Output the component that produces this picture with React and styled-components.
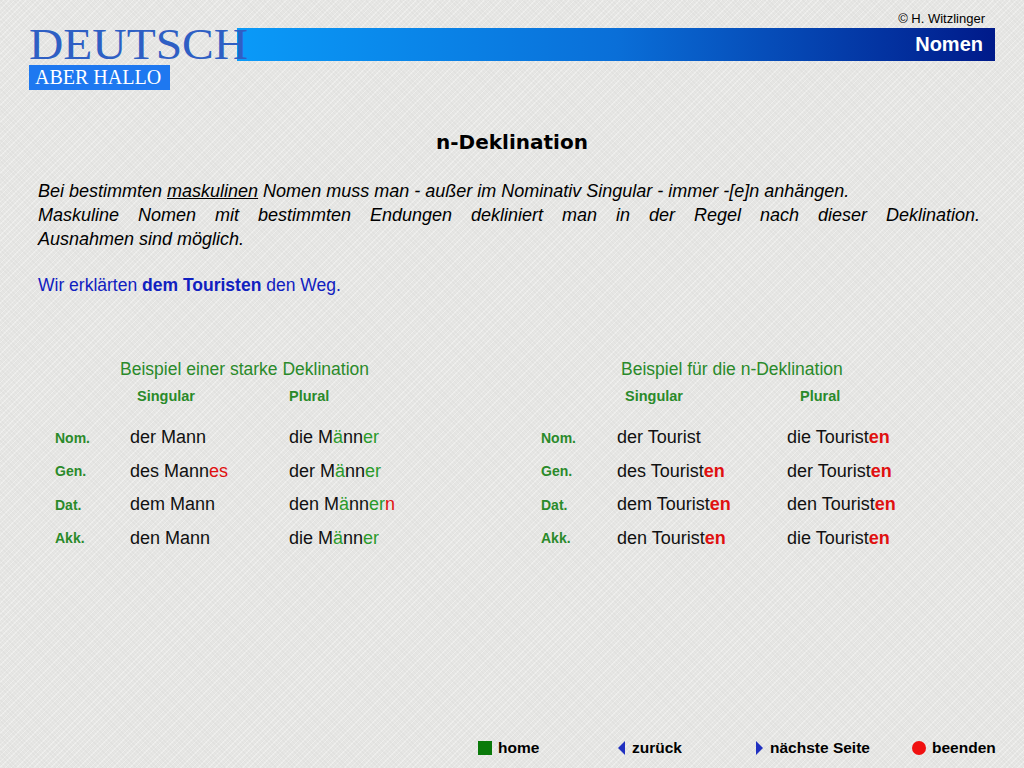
import React from "react";
import styled, { createGlobalStyle } from "styled-components";

const G = createGlobalStyle`
  html,body{margin:0;padding:0;}
  body{background:#e6e6e4;font-family:"Liberation Sans",Arial,sans-serif;}
`;
const Page = styled.div`width:1024px;height:768px;position:relative;overflow:hidden;
  background-image:repeating-linear-gradient(45deg,rgba(0,0,0,.025) 0 1px,transparent 1px 3px),repeating-linear-gradient(-45deg,rgba(255,255,255,.35) 0 1px,transparent 1px 4px);`;
const Header = styled.div`display:flex;padding:9px 29px 0 29px;gap:4px;`;
const Logo = styled.div`display:flex;flex-direction:column;width:204px;`;
const LogoTitle = styled.div`font-family:"Liberation Serif",serif;font-size:44px;line-height:38px;color:#2e5fc4;transform:scaleX(1.08);transform-origin:left;margin-top:17px;`;
const LogoSub = styled.div`background:#1e78f0;color:#fff;font-family:"Liberation Serif",serif;font-size:20px;width:141px;padding:0 0 0 6px;height:25px;box-sizing:border-box;line-height:25px;margin-top:1px;`;
const Right = styled.div`flex:1;display:flex;flex-direction:column;align-items:flex-end;`;
const Copy = styled.div`font-size:13px;color:#000;margin-right:10px;height:19px;line-height:19px;`;
const Bar = styled.div`align-self:stretch;height:33px;background:linear-gradient(90deg,#0a9af8,#0a6fd8 50%,#001a8a);color:#fff;font-weight:bold;font-size:20px;display:flex;align-items:center;justify-content:flex-end;padding-right:12px;`;
const Title = styled.h1`margin:40px 0 0;text-align:center;font-family:"DejaVu Sans",sans-serif;font-size:20px;font-weight:bold;`;
const Para = styled.p`margin:25px 44px 0 38px;font-style:italic;font-size:18px;line-height:24px;text-align:justify;`;
const Line = styled.span`display:block;text-align:${p=>p.j?"justify":"left"};text-align-last:${p=>p.j?"justify":"auto"};`;
const U = styled.span`text-decoration:underline;`;
const Example = styled.p`margin:24px 0 0 38px;font-size:17.5px;color:#1020c0;`;
const Tables = styled.div`display:grid;grid-template-columns:486px 1fr;margin-top:58px;`;
const Table = styled.div`display:grid;grid-template-columns:${p=>p.cols};grid-auto-rows:33.5px;align-items:center;padding-left:${p=>p.pl}px;`;
const Head = styled.div`grid-column:1/-1;color:#2a8a2a;font-size:17.5px;height:24px;padding-left:${p=>p.pl}px;`;
const Sub = styled.div`color:#2a8a2a;font-weight:bold;font-size:14.5px;padding-left:${p=>p.pl||0}px;align-self:start;`;
const Lab = styled.div`color:#2a8a2a;font-weight:bold;font-size:14px;`;
const Cell = styled.div`font-size:18px;color:#111;`;
const R = styled.span`color:${p=>p.c==="g"?"#2a9a2a":"#e01010"};font-weight:${p=>p.b?"bold":"normal"};`;
const Footer = styled.div`position:absolute;bottom:11px;left:478px;display:flex;font-weight:bold;font-size:15.5px;`;
const Nav = styled.div`display:flex;align-items:center;gap:6px;width:${p=>p.w}px;`;
const Sq = styled.span`width:14px;height:14px;background:#0a7a0a;display:inline-block;`;
const Dot = styled.span`width:14px;height:14px;border-radius:50%;background:#f01010;display:inline-block;`;
const Tri = ({l})=> <svg width="9" height="14" viewBox="0 0 9 14"><polygon points={l?"8,0 8,14 1,7":"1,0 1,14 8,7"} fill="#2030c0"/></svg>;

const left=[["Nom.","der Mann",<>die M<R c="g">ä</R>nn<R c="g">er</R></>],["Gen.",<>des Mann<R>es</R></>,<>der M<R c="g">ä</R>nn<R c="g">er</R></>],["Dat.","dem Mann",<>den M<R c="g">ä</R>nn<R c="g">er</R><R>n</R></>],["Akk.","den Mann",<>die M<R c="g">ä</R>nn<R c="g">er</R></>]];
const E=<R b>en</R>;
const right=[["Nom.","der Tourist",<>die Tourist{E}</>],["Gen.",<>des Tourist{E}</>,<>der Tourist{E}</>],["Dat.",<>dem Tourist{E}</>,<>den Tourist{E}</>],["Akk.",<>den Tourist{E}</>,<>die Tourist{E}</>]];

export default function App(){
  return <Page><G/>
    <Header>
      <Logo><LogoTitle>DEUTSCH</LogoTitle><LogoSub>ABER HALLO</LogoSub></Logo>
      <Right><Copy>© H. Witzlinger</Copy><Bar>Nomen</Bar></Right>
    </Header>
    <Title>n-Deklination</Title>
    <Para>
      <Line>Bei bestimmten <U>maskulinen</U> Nomen muss man - außer im Nominativ Singular - immer -[e]n anhängen.</Line>
      <Line j>Maskuline Nomen mit bestimmten Endungen dekliniert man in der Regel nach dieser Deklination.</Line>
      <Line>Ausnahmen sind möglich.</Line>
    </Para>
    <Example>Wir erklärten <b>dem Touristen</b> den Weg.</Example>
    <Tables>
      <Table cols="75px 159px 1fr" pl={55}>
        <Head pl={65}>Beispiel einer starke Deklination</Head>
        <div/><Sub pl={7}>Singular</Sub><Sub pl={-6}>Plural</Sub>
        {left.map(r=><React.Fragment key={r[0]}><Lab>{r[0]}</Lab><Cell>{r[1]}</Cell><Cell>{r[2]}</Cell></React.Fragment>)}
      </Table>
      <Table cols="76px 170px 1fr" pl={55}>
        <Head pl={80}>Beispiel für die n-Deklination</Head>
        <div/><Sub pl={8}>Singular</Sub><Sub pl={13}>Plural</Sub>
        {right.map(r=><React.Fragment key={r[0]}><Lab>{r[0]}</Lab><Cell>{r[1]}</Cell><Cell>{r[2]}</Cell></React.Fragment>)}
      </Table>
    </Tables>
    <Footer>
      <Nav w={139}><Sq/>home</Nav>
      <Nav w={138}><Tri l/>zurück</Nav>
      <Nav w={157}><Tri/>nächste Seite</Nav>
      <Nav w={100}><Dot/>beenden</Nav>
    </Footer>
  </Page>;
}
